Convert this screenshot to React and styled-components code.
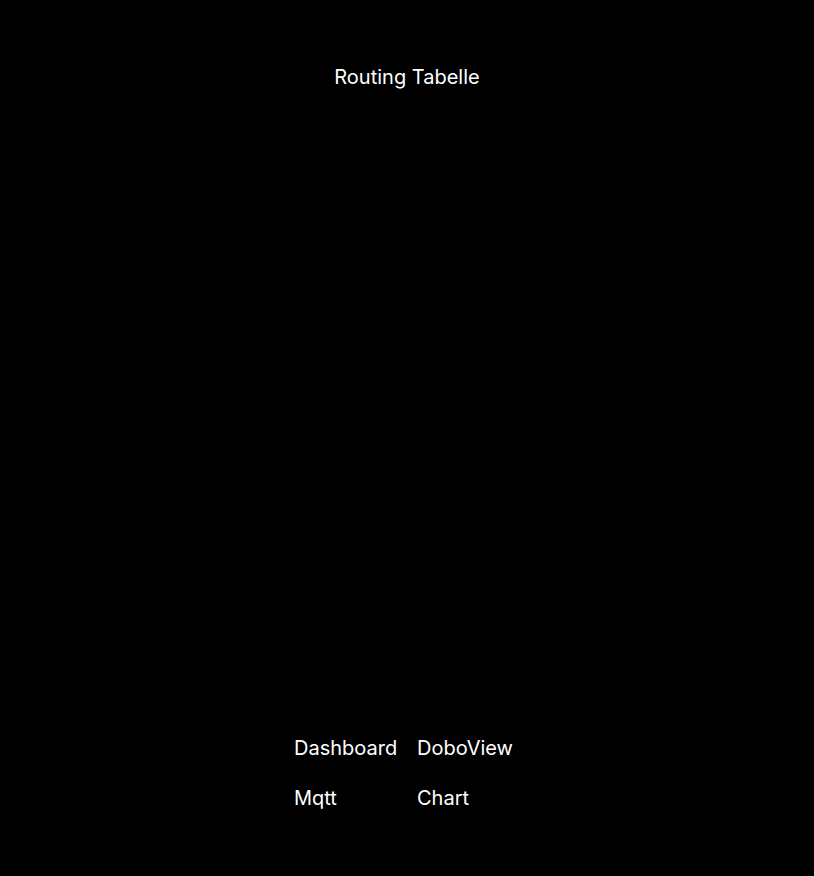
import React from "react";
import styled, { createGlobalStyle } from "styled-components";

const Global = createGlobalStyle`
  html, body { margin: 0; padding: 0; background: #000; }
  body { font-family: Inter, "Noto Sans", sans-serif; color: #fff; }
`;

const Page = styled.div`
  min-height: 876px;
  display: flex;
  flex-direction: column;
  align-items: center;
  background: #000;
`;

const Title = styled.h1`
  margin: 65px 0 0;
  font-size: 20px;
  font-weight: 400;
  line-height: 24px;
  color: #fff;
`;

const Spacer = styled.div`
  flex: 1;
`;

const Nav = styled.nav`
  display: grid;
  grid-template-columns: repeat(2, 103px);
  column-gap: 20px;
  row-gap: 26px;
  margin-bottom: 66px;
`;

const NavLink = styled.a`
  font-size: 20px;
  line-height: 24px;
  color: #fff;
  text-decoration: none;
  white-space: nowrap;
`;

export default function App() {
  return (
    <>
      <Global />
      <Page>
        <Title>Routing Tabelle</Title>
        <Spacer />
        <Nav>
          <NavLink href="#">Dashboard</NavLink>
          <NavLink href="#">DoboView</NavLink>
          <NavLink href="#">Mqtt</NavLink>
          <NavLink href="#">Chart</NavLink>
        </Nav>
      </Page>
    </>
  );
}
